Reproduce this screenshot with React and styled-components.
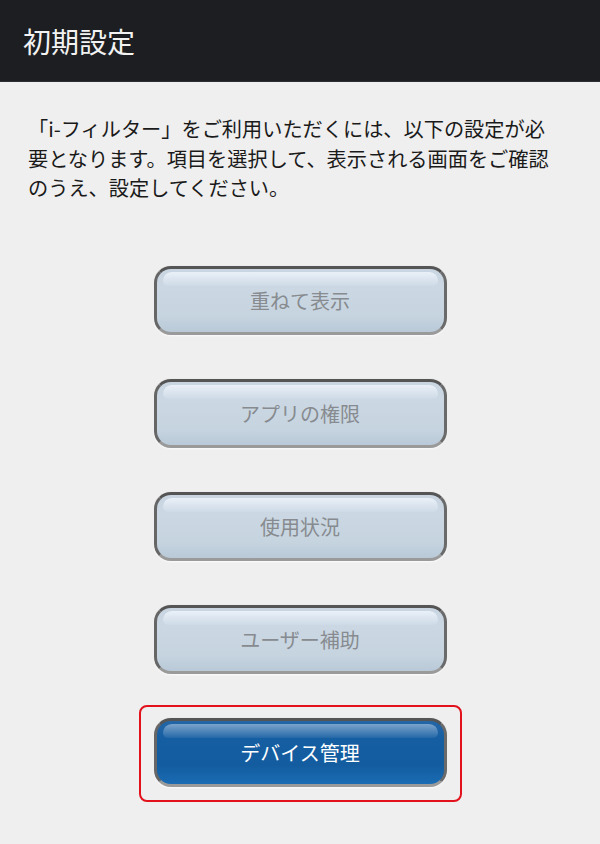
import React from "react";
import styled, { createGlobalStyle, css } from "styled-components";

const Global = createGlobalStyle`
  html, body { margin: 0; padding: 0; background: #efefef; }
  body { font-family: "Noto Sans CJK JP", "Noto Sans", sans-serif; }
  * { box-sizing: border-box; }
`;

const Page = styled.div`
  width: 600px;
  min-height: 844px;
  background: #efefef;
  display: flex;
  flex-direction: column;
`;

const Header = styled.header`
  height: 82px;
  background: #1c1e21;
  display: flex;
  align-items: center;
  padding: 0 22px 0 23px;
  border-bottom: 1px solid #2c2e31;
`;

const Title = styled.h1`
  margin: 0;
  font-size: 28px;
  font-weight: 400;
  color: #f2f2f2;
`;

const Intro = styled.p`
  margin: 0;
  padding: 32px 0 0 28px;
  max-width: 558px;
  font-size: 20.2px;
  line-height: 29.5px;
  color: #1a1a1a;
`;

const Buttons = styled.div`
  display: flex;
  flex-direction: column;
  align-items: center;
  gap: 44px;
  padding-top: 63px;
`;

const Highlight = styled.div`
  margin-top: -13px;
  padding: 11px 13px 13px 13px;
  border: 2px solid #e2111c;
  border-radius: 8px;
`;

const SetupButton = styled.button`
  position: relative;
  width: 293px;
  height: 69px;
  border-radius: 17px;
  border: 3px solid;
  border-color: #555 #6a6a6a #9a9a9a #666;
  font-family: inherit;
  font-size: 20px;
  display: flex;
  align-items: center;
  justify-content: center;
  overflow: hidden;
  box-shadow: 0 1px 2px rgba(255,255,255,0.9), 0 0 1px rgba(0,0,0,0.2);
  cursor: pointer;

  &::before {
    content: "";
    position: absolute;
    left: 6px;
    right: 6px;
    top: 3px;
    height: 14px;
    border-radius: 10px 10px 6px 6px;
    pointer-events: none;
  }

  ${(p) =>
    p.$primary
      ? css`
          color: #ffffff;
          background: linear-gradient(to bottom, #2466a6 0%, #155ea2 30%, #135c9f 70%, #1a6cb4 100%);
          &::before {
            background: linear-gradient(to bottom, rgba(160,190,220,0.7), rgba(90,140,190,0.2));
          }
        `
      : css`
          color: #878b8f;
          background: linear-gradient(to bottom, #c9d6e2 0%, #cbd8e4 30%, #c6d4e0 75%, #b9c9d7 100%);
          &::before {
            background: linear-gradient(to bottom, rgba(240,245,252,0.85), rgba(215,226,238,0.25));
          }
        `}
`;

const Label = styled.span`
  position: relative;
`;

const items = ["重ねて表示", "アプリの権限", "使用状況", "ユーザー補助"];

export default function App() {
  return (
    <>
      <Global />
      <Page>
        <Header>
          <Title>初期設定</Title>
        </Header>
        <Intro>
          「i-フィルター」をご利用いただくには、以下の設定が必要となります。項目を選択して、表示される画面をご確認のうえ、設定してください。
        </Intro>
        <Buttons>
          {items.map((t) => (
            <SetupButton key={t}>
              <Label>{t}</Label>
            </SetupButton>
          ))}
          <Highlight>
            <SetupButton $primary>
              <Label>デバイス管理</Label>
            </SetupButton>
          </Highlight>
        </Buttons>
      </Page>
    </>
  );
}
